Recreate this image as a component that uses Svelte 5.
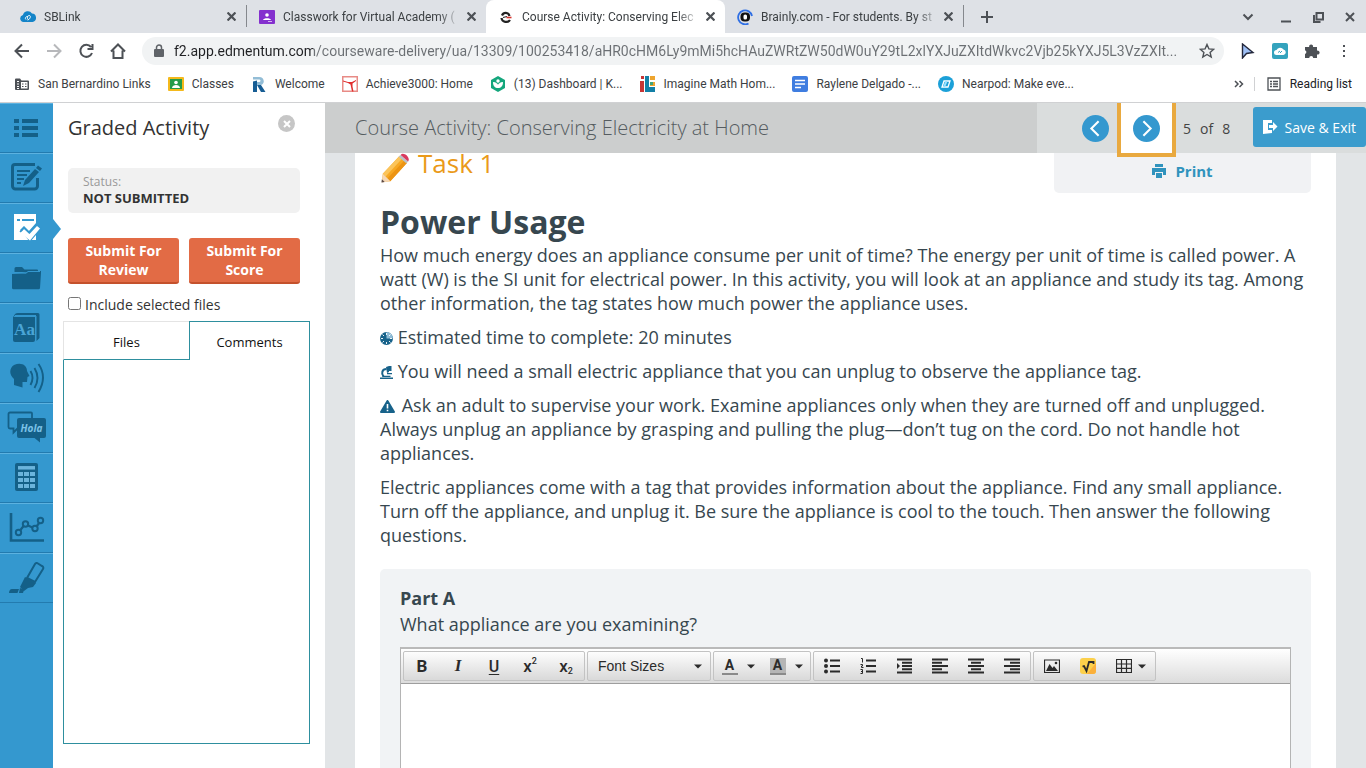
<script>
  let include = false;
  let fontSize = "Font Sizes";

  const tabs = [
    { icon: "cloud", title: "SBLink" },
    { icon: "classroom", title: "Classwork for Virtual Academy (" },
    { icon: "edmentum", title: "Course Activity: Conserving Elec", active: true },
    { icon: "brainly", title: "Brainly.com - For students. By st" },
  ];

  const bookmarks = [
    { icon: "folder", title: "San Bernardino Links" },
    { icon: "classes", title: "Classes" },
    { icon: "welcome", title: "Welcome" },
    { icon: "achieve", title: "Achieve3000: Home" },
    { icon: "khan", title: "(13) Dashboard | K..." },
    { icon: "imagine", title: "Imagine Math Hom..." },
    { icon: "docs", title: "Raylene Delgado -..." },
    { icon: "nearpod", title: "Nearpod: Make eve..." },
  ];

  const tools = ["contents", "notes", "activity", "files", "glossary", "speech", "translate", "calculator", "graph", "highlighter"];

  const url = "f2.app.edmentum.com/courseware-delivery/ua/13309/100253418/aHR0cHM6Ly9mMi5hcHAuZWRtZW50dW0uY29tL2xlYXJuZXItdWkvc2Vjb25kYXJ5L3VzZXIt...";
</script>

{#snippet favicon(name)}
  <svg class="favicon" viewBox="0 0 16 16" aria-hidden="true">
    {#if name === "cloud"}
      <path d="M3.500 13a3.500 3.500 0 0 1-.6-6.900A5 5 0 0 1 12 4.500a4.300 4.300 0 0 1 .6 8.500z" fill="#1484c8" />
      <path d="M6 10.500c-1.500-1 0-3.500 2-3M7.500 11c2 0 4-4 2-4.500s-3 3.500-1 4" fill="none" stroke="#fff" stroke-width="1" />
    {:else if name === "classroom"}
      <rect y="1" width="16" height="14" rx="1" fill="#8430ce" />
      <circle cx="8" cy="6" r="1.800" fill="#fff" />
      <path d="M4 11c.5-2.500 7.500-2.500 8 0z" fill="#fff" />
      <rect x="9" y="12" width="4" height="1" fill="#d5b4f0" />
    {:else if name === "edmentum"}
      <path d="M4 6.500C5.500 3 10.500 3 11.500 7M3.500 9c.5 4.500 6.500 5 8.500 2" fill="none" stroke="#222" stroke-width="2.200" />
      <path d="M5 8.500l4-1" stroke="#222" stroke-width="1.200" />
      <path d="M8.500 8.500h5" stroke="#d5322c" stroke-width="1.600" />
    {:else if name === "brainly"}
      <path d="M11.500 14.500A7 7 0 1 1 15 7" fill="none" stroke="#2f6fe4" stroke-width="1.800" />
      <rect x="3.500" y="3.500" width="9.500" height="9" rx="4" fill="#111" />
      <rect x="6.500" y="5.500" width="3.500" height="5" rx="1.600" fill="#fff" />
    {:else if name === "folder"}
      <path d="M1 3.500a1 1 0 0 1 1-1h4l1.500 2H14a1 1 0 0 1 1 1V13a1 1 0 0 1-1 1H2a1 1 0 0 1-1-1z" fill="#4d5156" />
      <path d="M7 6h6.500v6.500H7z" fill="#fff" />
      <path d="M3 5.500h2M3 8h2M3 10.500h2M3 12.500h2" stroke="#fff" stroke-width="1" />
      <path d="M8 8h1.500M11 8h1.500M8 10.500h1.500M11 10.500h1.500" stroke="#4d5156" stroke-width="1.200" />
    {:else if name === "classes"}
      <rect y="1" width="16" height="14" rx="1" fill="#f4b91c" />
      <rect x="2" y="3" width="12" height="10" fill="#259b4a" />
      <circle cx="8" cy="6.500" r="1.800" fill="#fff" />
      <path d="M4 12c0-4 8-4 8 0z" fill="#fff" />
    {:else if name === "welcome"}
      <path d="M2 1h6c6 0 6 7 2 8H6V6h2c2 0 2-2.500 0-2.500H2z" fill="#93bdd6" />
      <path d="M2 5.500l4-1V16H2zM6 9l4 0 4.500 7H10z" fill="#175d94" />
    {:else if name === "achieve"}
      <rect x=".5" y=".5" width="15" height="15" fill="#fff" stroke="#e88b86" />
      <path d="M1 4.500l5 1.500h4l4-2v1l-3.500 2.500v3l1 5H10L8.500 8.500 6 7 1 5.500z" fill="#e12d2d" />
    {:else if name === "khan"}
      <path d="M8 0l7 4v8l-7 4-7-4V4z" fill="#14a67c" />
      <circle cx="8" cy="5" r="1.700" fill="#fff" />
      <path d="M3 6c3 0 5 2 5 3 0-1 2-3 5-3 0 4-2 6-5 6S3 10 3 6z" fill="#fff" />
    {:else if name === "imagine"}
      <path d="M1 0h3v3H1zM0 5h4v11H0z" fill="#c73434" />
      <path d="M5 0h4v11h6v5H5z" fill="#127fa6" />
      <path d="M10 0h5v4h-5zM10 6h5v4h-5z" fill="#eea52f" />
      <path d="M10 6h3v3h-3z" fill="#43a47a" />
    {:else if name === "docs"}
      <rect width="16" height="16" rx="2" fill="#3f7de0" />
      <path d="M3 4.500h10M3 8h10M3 11.500h6" stroke="#fff" stroke-width="1.700" />
    {:else}
      <circle cx="8" cy="8" r="8" fill="#1ca0d8" />
      <path d="M6 5h6L10 11H4z" fill="none" stroke="#fff" stroke-width="1.300" />
      <path d="M8.500 5L6 11" stroke="#9be1ff" />
    {/if}
  </svg>
{/snippet}

{#snippet toolIcon(name)}
  <svg viewBox="0 0 53 50" aria-hidden="true">
    {#if name === "contents"}
      <path d="M14 18h5M14 25h5M14 32h5M22 18h16M22 25h16M22 32h16" class="line" stroke-width="4" />
    {:else if name === "notes"}
      <path d="M35 11.500H15a2.500 2.500 0 0 0-2.500 2.500v19a3 3 0 0 0 3 3h19a3 3 0 0 0 3-3v-8" class="line" stroke-width="3" />
      <path d="M17 18h13M17 22h10M17 26h7M17 30h4" class="line" stroke-width="1.800" />
      <path d="M23 33l2-6 10-11 4 3-10 11zM36 15l2-2.500 4 3-2 2.500z" />
    {:else if name === "activity"}
      <path d="M14 11h22v26H14z" class="white" />
      <path d="M17 17h3M22 17h12" class="blue" stroke-width="1.800" />
      <path d="M20 27l4-4 5 5 7-8 6 5-12 14z" class="bg" />
      <path d="M20.500 30l3.500-4 5.500 5 7.500-8 3 2.500-10 12z" class="white" />
      <path d="M20 29l4-4.500 5 5 7-7.500" class="blue" stroke-width="1.400" />
    {:else if name === "files"}
      <path d="M14.500 19v-3.500a1.500 1.500 0 0 1 1.500-1.500h6l2.500 2.500H37a1 1 0 0 1 1 1V19z" />
      <path d="M12 21l15-1.500 1.500-1.500H41v2l-1 15a1.500 1.500 0 0 1-1.500 1.300h-25A1.500 1.500 0 0 1 12 35z" />
      <path d="M13 20l13 .2 2-1.700h12" class="blue" stroke-width="1" />
    {:else if name === "glossary"}
      <path d="M14 14a4 4 0 0 1 4-4h20a1.500 1.500 0 0 1 1.500 1.500V35l-3 3V13H13z" />
      <path d="M15 12h21v1.500H15z" class="bg" />
      <path d="M13 14h22v23a2 2 0 0 1-2 2H15a2 2 0 0 1-2-2z" />
      <text x="24.500" y="32" text-anchor="middle" class="serif">Aa</text>
    {:else if name === "speech"}
      <path d="M14 32v-6c-5-4-5-11 0-14 7-3 13 0 13 6l2.500 5-2 1-.5 5h-4.500v5.500z" />
      <path d="M30.500 18q4 6.500 0 14M34.500 15q6 10 0 20M38.500 11q9 13 0 28" class="line" stroke-width="1.900" />
    {:else if name === "translate"}
      <path d="M32 15v-4.500a1 1 0 0 0-1-1H10a1.500 1.500 0 0 0-1.500 1.500v13a1.500 1.500 0 0 0 1.500 1.500h3.500v4l4-4" class="line" stroke-width="1.800" />
      <path d="M19 15h25a2 2 0 0 1 2 2v16a2 2 0 0 1-2 2h-4v4.500L34.500 35H19a2 2 0 0 1-2-2V17a2 2 0 0 1 2-2z" />
      <text x="31.500" y="29" text-anchor="middle" class="hola">Hola</text>
    {:else if name === "calculator"}
      <rect x="15" y="10" width="23" height="28" rx="2" />
      <path d="M18 14.800h17" class="pale" stroke-width="3.500" />
      <path d="M18 21h17M18 27h17M18 33h17" class="pale" stroke-width="4" stroke-dasharray="5 1" />
    {:else if name === "graph"}
      <path d="M11 10v27.500h33" class="line" stroke-width="2.600" />
      <path d="M20 27.500l4-5M28 22.500l4.500 2M36.500 23.500l3-4" class="line" stroke-width="2.200" />
      <g class="line" stroke-width="2"><circle cx="18.500" cy="29.500" r="2.700" /><circle cx="25.500" cy="21" r="2.700" /><circle cx="35" cy="25.500" r="2.700" /><circle cx="40.500" cy="17.500" r="2.700" /></g>
    {:else}
      <path d="M27 25l8-14a2 2 0 0 1 3-.5l4 2.500a2 2 0 0 1 1 3L35 29z" class="line" stroke-width="2" />
      <path d="M25 24l11 6-3 4-5 1-4 3-4-4 2-4zM20 35l4 2-1 3h-4zM12 36h7l-1.500 4H9c0-2 1-4 3-4z" />
    {/if}
  </svg>
{/snippet}

{#snippet caret()}
  <svg class="caret" viewBox="0 0 8 5" aria-hidden="true"><path d="M0 .5h8L4 4.500z" /></svg>
{/snippet}

<div class="window">
  <header class="chrome">
    <div class="tabs">
      {#each tabs as tab}
        <div class="tab" class:active={tab.active}>
          {@render favicon(tab.icon)}
          <span class="tab-title">{tab.title}</span>
          <button class="close" aria-label="Close tab">
            <svg viewBox="0 0 8 8"><path d="M.5.5l7 7M7.500.5l-7 7" /></svg>
          </button>
        </div>
      {/each}
      <button class="new-tab" aria-label="New tab">
        <svg viewBox="0 0 12 12"><path d="M6 0v12M0 6h12" /></svg>
      </button>
      <div class="win-buttons">
        <button aria-label="Search tabs"><svg viewBox="0 0 12 12"><path d="M1.500 3.500L6 8l4.500-4.500" /></svg></button>
        <button aria-label="Minimize"><svg viewBox="0 0 12 12"><path d="M1 10.500h10" /></svg></button>
        <button aria-label="Restore"><svg viewBox="0 0 12 12"><path d="M4.500 2H11v6.500H4.500zM2 4v7h6.500" /></svg></button>
        <button aria-label="Close"><svg viewBox="0 0 12 12"><path d="M2 2l8 8M10 2l-8 8" /></svg></button>
      </div>
    </div>

    <div class="toolbar">
      <button aria-label="Back"><svg viewBox="0 0 16 16"><path d="M15 8H2M8 1.500L1.500 8 8 14.500" /></svg></button>
      <button aria-label="Forward" disabled><svg viewBox="0 0 16 16"><path d="M1 8h13M8 1.500L14.500 8 8 14.500" /></svg></button>
      <button aria-label="Reload"><svg viewBox="0 0 16 16"><path d="M13 4a6 6 0 1 0 1 6M14.500 1v5h-5" /></svg></button>
      <button aria-label="Home"><svg viewBox="0 0 16 16"><path d="M1 8.500L8 1.500l7 7M3.500 7.500V15h9V7.500" /></svg></button>
      <div class="omnibox">
        <svg class="lock" viewBox="0 0 10 14" aria-hidden="true">
          <rect y="5" width="10" height="8" rx="1" /><path d="M2.500 5V3.500a2.500 2.500 0 0 1 5 0V5" fill="none" stroke="#5f6368" stroke-width="1.500" />
        </svg>
        <input type="text" aria-label="Address" value={url} />
        <button aria-label="Bookmark this tab">
          <svg viewBox="0 0 16 16"><path d="M8 1.500l1.900 4.400 4.800.4-3.600 3.100 1.100 4.600L8 11.500 3.800 14l1.100-4.600L1.300 6.300l4.800-.4z" stroke-width="1.400" /></svg>
        </button>
      </div>
      <div class="extensions">
        <button aria-label="Cursor"><svg viewBox="0 0 16 16"><path d="M2.500 1v14l4-4.500 6.500-1z" fill="#9fc0f5" stroke="#23273b" stroke-width="1.400" /></svg></button>
        <button aria-label="SBLink">
          <svg viewBox="0 0 16 16"><rect width="16" height="16" rx="2" fill="#34a3bd" stroke="none" /><path d="M4.500 12a2.500 2.500 0 0 1 0-5 4 4 0 0 1 7-.5 2.800 2.800 0 0 1 0 5.500z" fill="#fff" stroke="none" /><path d="M6 9.500l2-1.500M8 10l2-2" stroke="#34a3bd" stroke-width="1" /></svg>
        </button>
        <button aria-label="Extensions"><svg viewBox="0 0 16 16"><path d="M1 4h4.200a2 2 0 1 1 3.800 0H13v3.700a2 2 0 1 1 0 3.800V15H9.200a2 2 0 0 0-4 0H1v-4a2 2 0 0 0 0-3.800z" fill="#4d5156" stroke="none" /></svg></button>
        <button aria-label="Menu"><svg viewBox="0 0 16 16"><path d="M7 2h2v2H7zM7 7h2v2H7zM7 12h2v2H7z" fill="#4d5156" stroke="none" /></svg></button>
      </div>
    </div>

    <nav class="bookmarks">
      {#each bookmarks as mark}
        <a href="#top">{@render favicon(mark.icon)}{mark.title}</a>
      {/each}
      <button class="more" aria-label="More bookmarks"><svg viewBox="0 0 10 8"><path d="M1 1l3 3-3 3M5.500 1l3 3-3 3" /></svg></button>
      <button class="reading">
        <svg viewBox="0 0 14 14"><path d="M1 1h12v12H1zM3 4.500h2M6 4.500h5M3 7h2M6 7h5M3 9.500h2M6 9.500h5" /></svg>
        Reading list
      </button>
    </nav>
  </header>

  <div class="app">
    <nav class="rail">
      {#each tools as tool}
        <button class="tool" class:selected={tool === "activity"} aria-label={tool}>{@render toolIcon(tool)}</button>
      {/each}
    </nav>

    <aside class="panel">
      <div class="panel-head">
        <h2>Graded Activity</h2>
        <button class="dismiss" aria-label="Close panel"><svg viewBox="0 0 8 8"><path d="M1 1l6 6M7 1L1 7" /></svg></button>
      </div>
      <div class="status">
        <span>Status:</span>
        <strong>NOT SUBMITTED</strong>
      </div>
      <div class="submits">
        <button>Submit For Review</button>
        <button>Submit For Score</button>
      </div>
      <label class="include"><input type="checkbox" bind:checked={include} />Include selected files</label>
      <div class="pane">
        <div class="pane-tabs" role="tablist">
          <button role="tab" aria-selected="false">Files</button>
          <button role="tab" aria-selected="true">Comments</button>
        </div>
        <div class="pane-body" role="tabpanel"></div>
      </div>
    </aside>

    <main>
      <div class="course-bar">
        <h1>Course Activity: Conserving Electricity at Home</h1>
        <div class="pager">
          <button class="round" aria-label="Previous page"><svg viewBox="0 0 26 26"><path d="M16 6l-7 7 7 7" /></svg></button>
          <div class="next">
            <button class="round" aria-label="Next page"><svg viewBox="0 0 26 26"><path d="M10 6l7 7-7 7" /></svg></button>
          </div>
          <span class="count"><span>5</span><span>of</span><span>8</span></span>
          <button class="save">
            <svg viewBox="0 0 16 16" aria-hidden="true"><path d="M1 1h9v3H6v7h4v3l-9 1z" /><path d="M7 6h4V3l4.500 4.500L11 12V9H7z" /></svg>
            Save &amp; Exit
          </button>
        </div>
      </div>

      <article class="sheet">
        <div class="top-row">
          <h3>
            <svg viewBox="0 0 30 32" aria-hidden="true">
              <path d="M20 3l8 7L10 30l-9 1 1-9z" fill="#f7a823" />
              <path d="M20 3l3 2.500L5 25l-3-3z" fill="#fbc45a" />
              <path d="M25 8l3 2.500L10 30l-3-3z" fill="#ec9413" />
              <path d="M2 22l8 8-9 1.500z" fill="#f5d7b5" />
              <path d="M1 28l3 3-3.500.5z" fill="#5c4a46" />
              <path d="M19 4l2-2 8 7-2 2z" fill="#b9c2c9" />
              <path d="M21 2c3-4 11 3 8 7z" fill="#d93a5e" />
            </svg>
            Task 1
          </h3>
          <div class="print-box">
            <a href="#print">
              <svg viewBox="0 0 14 14" aria-hidden="true"><path d="M3 0h8v3H3zM0 4h14v7h-3V8H3v3H0zM4 9h6v5H4z" /></svg>
              Print
            </a>
          </div>
        </div>

        <h2>Power Usage</h2>
        <p>How much energy does an appliance consume per unit of time? The energy per unit of time is called power. A watt (W) is the SI unit for electrical power. In this activity, you will look at an appliance and study its tag. Among other information, the tag states how much power the appliance uses.</p>
        <p>
          <svg class="mark" viewBox="0 0 13 13" aria-hidden="true">
            <circle cx="6.500" cy="6.500" r="6.500" fill="#17628a" />
            <path d="M6.500 6.500V0a6.500 6.500 0 0 1 6.500 6.500z" fill="#8fbcd6" />
            <path d="M6.500 1v2M6.500 10v2M1 6.500h2M10 6.500h2M2.500 2.500l1.500 1.500M9 9l1.500 1.500M2.500 10.500L4 9M10.500 2.500L9 4" stroke="#fff" stroke-width=".9" />
          </svg>
          Estimated time to complete: 20 minutes
        </p>
        <p>
          <svg class="mark" viewBox="0 0 13 13" aria-hidden="true">
            <path d="M0 13h13v-1.500H0zM2.500 11h8V9.800h-8zM6 1l3-1v6L7 7zM9 0h2.500v5H9zM7 7h5v1.300H7z" fill="#17628a" />
            <path d="M6.500 3C2 3 1 7.500 3.500 10.500" fill="none" stroke="#17628a" stroke-width="2" />
          </svg>
          You will need a small electric appliance that you can unplug to observe the appliance tag.
        </p>
        <p>
          <svg class="mark wide" viewBox="0 0 15 13" aria-hidden="true">
            <path d="M7.500 1L14 12H1z" fill="#17628a" stroke="#17628a" stroke-width="2" stroke-linejoin="round" />
            <path d="M7.500 4v4.500M7.500 9.700v1.600" stroke="#fff" stroke-width="1.600" />
          </svg>
          Ask an adult to supervise your work. Examine appliances only when they are turned off and unplugged. Always unplug an appliance by grasping and pulling the plug—don’t tug on the cord. Do not handle hot appliances.
        </p>
        <p>Electric appliances come with a tag that provides information about the appliance. Find any small appliance. Turn off the appliance, and unplug it. Be sure the appliance is cool to the touch. Then answer the following questions.</p>

        <section class="part">
          <h4>Part A</h4>
          <label for="answer">What appliance are you examining?</label>
          <div class="editor">
            <div class="editor-bar">
              <div class="group">
                <button aria-label="Bold"><b>B</b></button>
                <button aria-label="Italic"><i>I</i></button>
                <button aria-label="Underline"><u>U</u></button>
                <button class="script" aria-label="Superscript">x<sup>2</sup></button>
                <button class="script" aria-label="Subscript">x<sub>2</sub></button>
              </div>
              <div class="group size">
                <select aria-label="Font sizes" bind:value={fontSize}>
                  <option>Font Sizes</option>
                  <option>12pt</option>
                  <option>18pt</option>
                </select>
                {@render caret()}
              </div>
              <div class="group colors">
                <button aria-label="Text color"><span class="swatch">A</span>{@render caret()}</button>
                <button aria-label="Background color"><span class="swatch filled">A</span>{@render caret()}</button>
              </div>
              <div class="group">
                <button aria-label="Bullet list"><svg viewBox="0 0 16 16"><path d="M6 2.500h10M6 8h10M6 13.500h10" /><g fill="#2b2b2b" stroke="none"><circle cx="2" cy="2.500" r="2" /><circle cx="2" cy="8" r="2" /><circle cx="2" cy="13.500" r="2" /></g></svg></button>
                <button aria-label="Numbered list"><svg viewBox="0 0 16 16"><path d="M6 2.500h10M6 8h10M6 13.500h10" /><path d="M1 .5h1.500v4M.5 6.500h2V8h-1v1.500h2M.5 11.500h2v4h-2M1 13.500h1.500" stroke-width="1" /></svg></button>
                <button aria-label="Indent"><svg viewBox="0 0 16 16"><path d="M1 1.500h15M6 4.800h10M6 8h10M6 11.200h10M1 14.500h15" /><path d="M1 5l3 3-3 3z" fill="#2b2b2b" stroke="none" /></svg></button>
                <button aria-label="Align left"><svg viewBox="0 0 16 16"><path d="M0 1.500h16M0 4.800h10M0 8h16M0 11.200h10M0 14.500h16" /></svg></button>
                <button aria-label="Align center"><svg viewBox="0 0 16 16"><path d="M0 1.500h16M3 4.800h10M0 8h16M3 11.200h10M0 14.500h16" /></svg></button>
                <button aria-label="Align right"><svg viewBox="0 0 16 16"><path d="M0 1.500h16M6 4.800h10M0 8h16M6 11.200h10M0 14.500h16" /></svg></button>
              </div>
              <div class="group">
                <button aria-label="Insert image"><svg viewBox="0 0 16 16"><path d="M.5 2h15v12.500H.5z" stroke-width="1.200" /><path d="M2 13l3.500-7 3 4 1.500-2 4 5z" fill="#2b2b2b" stroke="none" /><circle cx="12" cy="5" r="1.300" fill="#2b2b2b" stroke="none" /></svg></button>
                <button aria-label="Insert equation"><svg viewBox="0 0 16 16"><rect width="16" height="16" rx="3" fill="#fcd04b" stroke="none" /><path d="M16 5v8a3 3 0 0 1-3 3H7z" fill="#fbb03b" stroke="none" /><path d="M2.500 8.500L4 8l2.500 5L9 4h4.500v2" stroke-width="1.800" /></svg></button>
                <button class="with-caret" aria-label="Insert table"><svg viewBox="0 0 16 16"><path d="M.5 1.500h15v13H.5zM.5 6h15M.5 10.300h15M5.500 1.500v13M10.500 1.500v13" stroke-width="1.200" /></svg>{@render caret()}</button>
              </div>
            </div>
            <textarea id="answer"></textarea>
          </div>
        </section>
      </article>
    </main>
  </div>
</div>

<style>
  :global(body) {
    font-family: "Open Sans", sans-serif;
    color: #37474f;
  }

  .window {
    display: flex;
    flex-direction: column;
    height: 100vh;
    overflow: hidden;
  }

  * {
    box-sizing: border-box;
  }

  button, input, select, textarea {
    font: inherit;
    color: inherit;
    margin: 0;
    padding: 0;
    border: 0;
    background: none;
  }

  svg {
    display: block;
    flex: none;
  }

  h1, h2, h3, h4, p {
    margin: 0;
  }

  /* browser chrome */
  .chrome {
    flex: none;
    font: 12px Roboto, sans-serif;
    color: #3c4043;
    background: #fff;
    border-bottom: 1px solid #d0d1d3;
  }

  .chrome svg {
    fill: none;
    stroke: #4d5156;
    stroke-width: 2;
  }

  .chrome .favicon {
    width: 16px;
    height: 16px;
    stroke: none;
  }

  .tabs {
    display: flex;
    height: 33px;
    padding-left: 8px;
    background: #dee1e6;
  }

  .tab {
    display: flex;
    align-items: center;
    gap: 8px;
    width: 239px;
    padding: 0 10px 0 12px;
  }

  .tab:first-child, .tab:nth-child(4) {
    border-right: 1px solid #85888d;
    border-image: linear-gradient(transparent 6px, #85888d 6px, #85888d 26px, transparent 26px) 1;
  }

  .tab.active {
    background: #fff;
    border-radius: 8px 8px 0 0;
  }

  .tab-title {
    flex: 1;
    white-space: nowrap;
    mask-image: linear-gradient(to right, #000 155px, transparent 178px);
  }

  .close, .close svg {
    width: 9px;
    height: 9px;
  }

  .new-tab {
    width: 46px;
    padding-left: 17px;
  }

  .new-tab svg, .win-buttons svg {
    width: 12px;
    height: 12px;
  }

  .win-buttons {
    display: flex;
    gap: 20px;
    margin-left: auto;
    padding-right: 10px;
  }

  .win-buttons button:first-child {
    margin-right: 6px;
  }

  .toolbar {
    display: flex;
    align-items: center;
    height: 36px;
    padding: 0 14px;
    gap: 16px;
  }

  .toolbar svg {
    width: 16px;
    height: 16px;
  }

  .toolbar button:disabled {
    opacity: 0.4;
  }

  .omnibox {
    flex: 1;
    display: flex;
    align-items: center;
    gap: 10px;
    height: 28px;
    padding: 0 9px 0 12px;
    border-radius: 14px;
    background: #f1f3f4;
  }

  .omnibox input {
    flex: 1;
    min-width: 0;
    font-size: 14px;
    background: linear-gradient(to right, #202124 139px, #6b6f73 139px);
    background-clip: text;
    color: transparent;
    text-overflow: ellipsis;
  }

  .chrome .lock {
    width: 10px;
    height: 14px;
    fill: #5f6368;
    stroke: none;
  }

  .extensions {
    display: flex;
    gap: 16px;
  }

  .bookmarks {
    display: flex;
    align-items: center;
    gap: 17px;
    height: 33px;
    padding: 0 14px 3px;
  }

  .bookmarks a {
    display: flex;
    align-items: center;
    gap: 8px;
    color: inherit;
    text-decoration: none;
    white-space: nowrap;
  }

  .more {
    margin-left: auto;
  }

  .more svg {
    width: 10px;
    height: 8px;
    stroke-width: 1.5;
  }

  .reading {
    display: flex;
    align-items: center;
    gap: 9px;
    padding-left: 12px;
    margin-left: -7px;
    border-left: 1px solid #d0d1d3;
    color: #202124;
  }

  .reading svg {
    width: 14px;
    height: 14px;
    stroke-width: 1.3;
  }

  /* course page */
  .app {
    flex: 1;
    display: flex;
    min-height: 0;
  }

  .rail {
    width: 53px;
    flex: none;
    background: #3498cf;
  }

  .tool {
    position: relative;
    display: block;
    width: 100%;
    height: 50px;
    border-top: 1px solid #5cb2e0;
    border-bottom: 1px solid #237baf;
  }

  .tool svg {
    width: 53px;
    height: 50px;
    margin-top: -1px;
    fill: #146088;
  }

  .tool.selected::after {
    content: "";
    position: absolute;
    left: 100%;
    top: 15px;
    border: 10px solid transparent;
    border-left: 8px solid #3498cf;
    border-right: 0;
  }

  .line {
    fill: none;
    stroke: #146088;
  }

  .white {
    fill: #fff;
  }

  .blue {
    fill: none;
    stroke: #3498cf;
  }

  .bg {
    fill: #3498cf;
  }

  .pale {
    stroke: #6bb4dc;
  }

  .serif {
    font: bold 17px "Liberation Serif", serif;
    fill: #4aa5d6;
  }

  .hola {
    font: italic bold 10px "Open Sans", sans-serif;
    fill: #7cc3e8;
  }

  .panel {
    display: flex;
    flex-direction: column;
    width: 272px;
    flex: none;
    padding: 11px 15px 24px 10px;
    background: #fff;
    color: #333;
    font-size: 14px;
  }

  .panel-head, .status, .submits, .include {
    margin: 0 10px 0 5px;
  }

  .panel-head {
    display: flex;
    justify-content: space-between;
    padding-right: 5px;
  }

  .panel h2 {
    font-size: 20px;
    font-weight: 400;
    line-height: 28px;
  }

  .dismiss {
    display: grid;
    place-items: center;
    width: 17px;
    height: 17px;
    margin-top: 1px;
    border-radius: 50%;
    background: #c6c6c6;
  }

  .dismiss svg {
    width: 8px;
    height: 8px;
    stroke: #fff;
    stroke-width: 2;
  }

  .status {
    margin-top: 26px;
    padding: 5px 15px 6px;
    border-radius: 5px;
    background: #f1f1f1;
    font-size: 12px;
    line-height: 17px;
  }

  .status span {
    display: block;
    color: #999;
  }

  .status strong {
    display: block;
    font-size: 13px;
  }

  .submits {
    display: flex;
    gap: 10px;
    margin-top: 25px;
  }

  .submits button {
    flex: 1;
    height: 46px;
    padding: 0 14px;
    border-bottom: 2px solid #c4512c;
    border-radius: 3px;
    background: #e26b45;
    color: #fff;
    font-weight: 700;
    line-height: 19px;
  }

  .include {
    display: flex;
    gap: 4px;
    margin-top: 10px;
    line-height: 21px;
  }

  .include input {
    width: 13px;
    height: 13px;
    margin-top: 3px;
  }

  .pane {
    flex: 1;
    display: flex;
    flex-direction: column;
    margin-top: 6px;
  }

  .pane-tabs {
    display: grid;
    grid-template-columns: 51% 1fr;
    height: 39px;
  }

  .pane-tabs button {
    padding-top: 2px;
    border: 1px solid #e4e4e4;
    border-width: 1px 0 1px 1px;
    border-bottom-color: #2e8f9e;
    font-size: 13px;
    color: #111;
  }

  .pane-tabs [aria-selected="true"] {
    border: 1px solid #2e8f9e;
    border-bottom: 0;
  }

  .pane-body {
    flex: 1;
    border: 1px solid #2e8f9e;
    border-top: 0;
  }

  main {
    flex: 1;
    min-width: 0;
    display: flex;
    flex-direction: column;
    background: #e2e5e7;
  }

  .course-bar {
    display: flex;
    height: 50px;
    flex: none;
    background: #dadddd;
  }

  .course-bar h1 {
    flex: 1;
    padding-left: 30px;
    background: #cccece;
    color: #555c60;
    font-size: 20px;
    font-weight: 300;
    line-height: 50px;
  }

  .pager {
    display: flex;
    align-items: center;
    width: 329px;
    padding-left: 45px;
  }

  .round {
    display: block;
    width: 27px;
    height: 27px;
    border-radius: 50%;
    background: #3498cf;
  }

  .round svg {
    width: 27px;
    height: 27px;
    fill: none;
    stroke: #fff;
    stroke-width: 2;
  }

  .next {
    z-index: 1;
    align-self: flex-start;
    margin: 0 7px 0 8px;
    height: 54px;
    padding: 12px 12px 0;
    border: 4px solid #e9a93f;
    border-top: 0;
    background: #fff;
  }

  .count {
    display: flex;
    gap: 9px;
    color: #444;
    font-size: 14px;
  }

  .save {
    display: flex;
    align-items: center;
    align-self: flex-start;
    gap: 7px;
    height: 40px;
    margin: 4px 0 0 auto;
    padding: 0 10px 0 9px;
    border-radius: 3px;
    background: #3b9ccd;
    color: #fff;
    font-size: 14px;
    white-space: nowrap;
  }

  .save svg {
    width: 16px;
    height: 16px;
    fill: #fff;
  }

  .sheet {
    flex: 1;
    min-height: 0;
    overflow: hidden;
    margin: 0 30px;
    padding: 0 25px;
    background: #fff;
    font-size: 18px;
    line-height: 24px;
  }

  .top-row {
    display: flex;
    justify-content: space-between;
    height: 50px;
  }

  .top-row h3 {
    display: flex;
    gap: 8px;
    color: #ea9a1a;
    font-size: 26px;
    font-weight: 400;
    line-height: 20px;
  }

  .top-row h3 svg {
    width: 30px;
    height: 30px;
  }

  .print-box {
    width: 257px;
    height: 40px;
    border-radius: 0 0 5px 5px;
    background: #f1f2f4;
  }

  .print-box a {
    display: flex;
    align-items: center;
    justify-content: center;
    gap: 9px;
    height: 36px;
    color: #3093bd;
    font-size: 15px;
    font-weight: 700;
    text-decoration: none;
  }

  .print-box svg {
    width: 14px;
    height: 14px;
    fill: currentColor;
  }

  .sheet h2 {
    padding-bottom: 2px;
    font-size: 32px;
    line-height: 38px;
  }

  .sheet p {
    margin-bottom: 10px;
  }

  .mark {
    display: inline-block;
    width: 13px;
    height: 13px;
    vertical-align: -1px;
  }

  .mark.wide {
    width: 15px;
    margin-right: 2px;
  }

  .part {
    margin-top: 22px;
    padding: 17px 20px;
    border-radius: 5px;
    background: #f1f3f5;
  }

  .part h4 {
    margin-bottom: 2px;
    font-size: 18px;
  }

  .part label {
    display: block;
  }

  .editor {
    margin-top: 11px;
    border: 1px solid #b4b4b4;
    border-top: 2px solid #bababa;
    background: #fff;
  }

  .editor-bar {
    display: flex;
    gap: 2px;
    height: 35px;
    padding: 2px;
    border-bottom: 1px solid #9e9e9e;
    background: linear-gradient(#fff, #dcdcdc);
    color: #2b2b2b;
    font: 14px "Liberation Sans", sans-serif;
  }

  .group {
    display: flex;
    align-items: center;
    height: 30px;
    border: 1px solid #c3c3c3;
    border-radius: 2px;
    background: linear-gradient(#fdfdfd, #d9d9d9);
  }

  .group button {
    display: flex;
    align-items: center;
    justify-content: center;
    width: 36px;
    height: 28px;
  }

  .group button svg {
    width: 16px;
    height: 16px;
    fill: none;
    stroke: #2b2b2b;
    stroke-width: 2;
  }

  .group b {
    font: bold 17px Roboto, sans-serif;
  }

  .group i {
    font: italic bold 17px "Liberation Serif", serif;
  }

  .group u {
    font: 500 16px Roboto, sans-serif;
    text-underline-offset: 2px;
  }

  .group .script {
    font: 500 17px Roboto, sans-serif;
  }

  .script sup, .script sub {
    font-size: 9px;
  }

  .script sup {
    margin-bottom: 10px;
  }

  .script sub {
    margin-top: 10px;
  }

  .group button .caret, .group .caret {
    width: 8px;
    height: 5px;
    fill: #2b2b2b;
    stroke: none;
  }

  .size {
    width: 124px;
    padding: 0 8px 0 10px;
  }

  .size select {
    flex: 1;
    appearance: none;
  }

  .colors button {
    gap: 9px;
    width: 48px;
  }

  .swatch {
    width: 16px;
    height: 17px;
    border-bottom: 2px solid #8a8a8a;
    font: bold 14px/15px Roboto, sans-serif;
  }

  .swatch.filled {
    background: #b5b5b5;
  }

  .group .with-caret {
    gap: 6px;
    width: 49px;
  }

  textarea {
    display: block;
    width: 100%;
    height: 200px;
    padding: 8px;
    resize: none;
  }
</style>
